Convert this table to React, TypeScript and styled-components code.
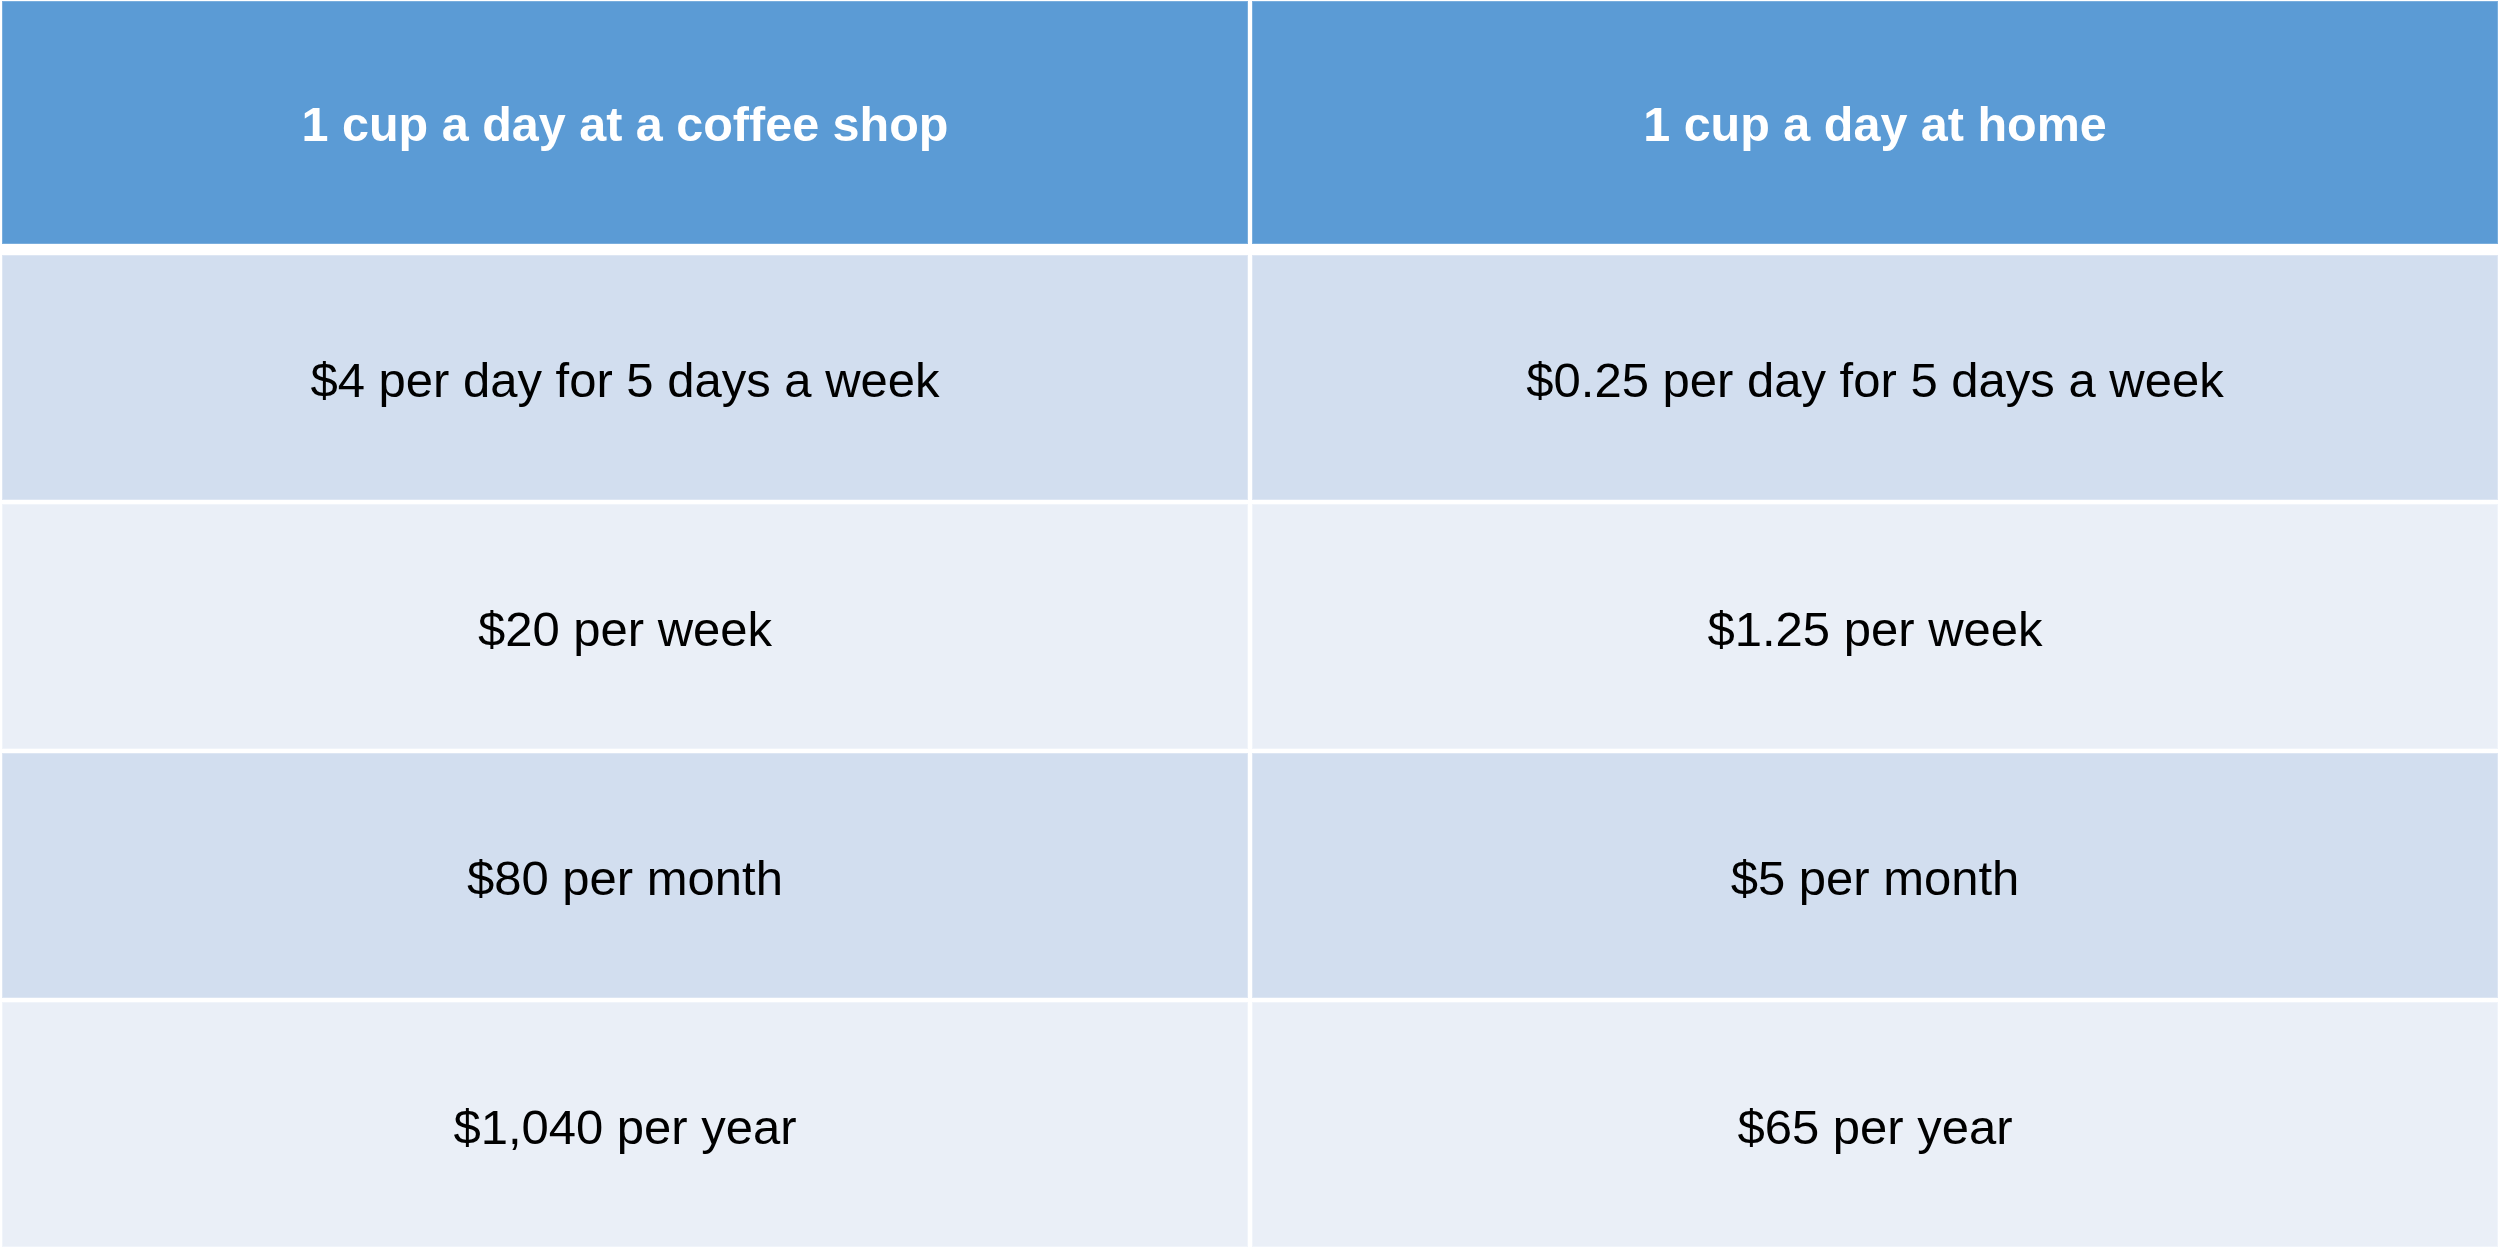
import React from "react";
import styled, { createGlobalStyle } from "styled-components";

const Global = createGlobalStyle`
  html, body {
    margin: 0;
    padding: 0;
    background: #ffffff;
  }
  body {
    font-family: "Liberation Sans", Arial, Helvetica, sans-serif;
  }
`;

const Table = styled.div`
  width: 2500px;
  box-sizing: border-box;
  padding: 1px 2px 0 2px;
  display: flex;
  flex-direction: column;
`;

const HeaderRow = styled.div`
  display: grid;
  grid-template-columns: 1fr 1fr;
  column-gap: 4px;
  height: 243px;
  margin-bottom: 11px;
`;

const Body = styled.div`
  display: flex;
  flex-direction: column;
  gap: 4px;
`;

const Row = styled.div`
  display: grid;
  grid-template-columns: 1fr 1fr;
  column-gap: 4px;
  height: 245px;
`;

const HeadCell = styled.div`
  background: #5b9bd5;
  color: #ffffff;
  font-weight: 700;
  font-size: 48.5px;
  display: flex;
  align-items: center;
  justify-content: center;
  padding-top: 2px;
  box-sizing: border-box;
  box-shadow: inset 0 0 0 1px #7aaedd;
`;

const Cell = styled.div<{ $alt: boolean }>`
  background: ${(p) => (p.$alt ? "#eaeff7" : "#d2deef")};
  color: #000000;
  font-size: 49px;
  display: flex;
  align-items: center;
  justify-content: center;
  padding-top: 4px;
  box-sizing: border-box;
  box-shadow: inset 0 0 0 1px ${(p) => (p.$alt ? "#f0f4fa" : "#dde6f3")};
`;

const rows: [string, string][] = [
  ["$4 per day for 5 days a week", "$0.25 per day for 5 days a week"],
  ["$20 per week", "$1.25 per week"],
  ["$80 per month", "$5 per month"],
  ["$1,040 per year", "$65 per year"],
];

export default function App() {
  return (
    <>
      <Global />
      <Table>
        <HeaderRow>
          <HeadCell>1 cup a day at a coffee shop</HeadCell>
          <HeadCell>1 cup a day at home</HeadCell>
        </HeaderRow>
        <Body>
          {rows.map(([a, b], i) => (
            <Row key={i}>
              <Cell $alt={i % 2 === 1}>{a}</Cell>
              <Cell $alt={i % 2 === 1}>{b}</Cell>
            </Row>
          ))}
        </Body>
      </Table>
    </>
  );
}
